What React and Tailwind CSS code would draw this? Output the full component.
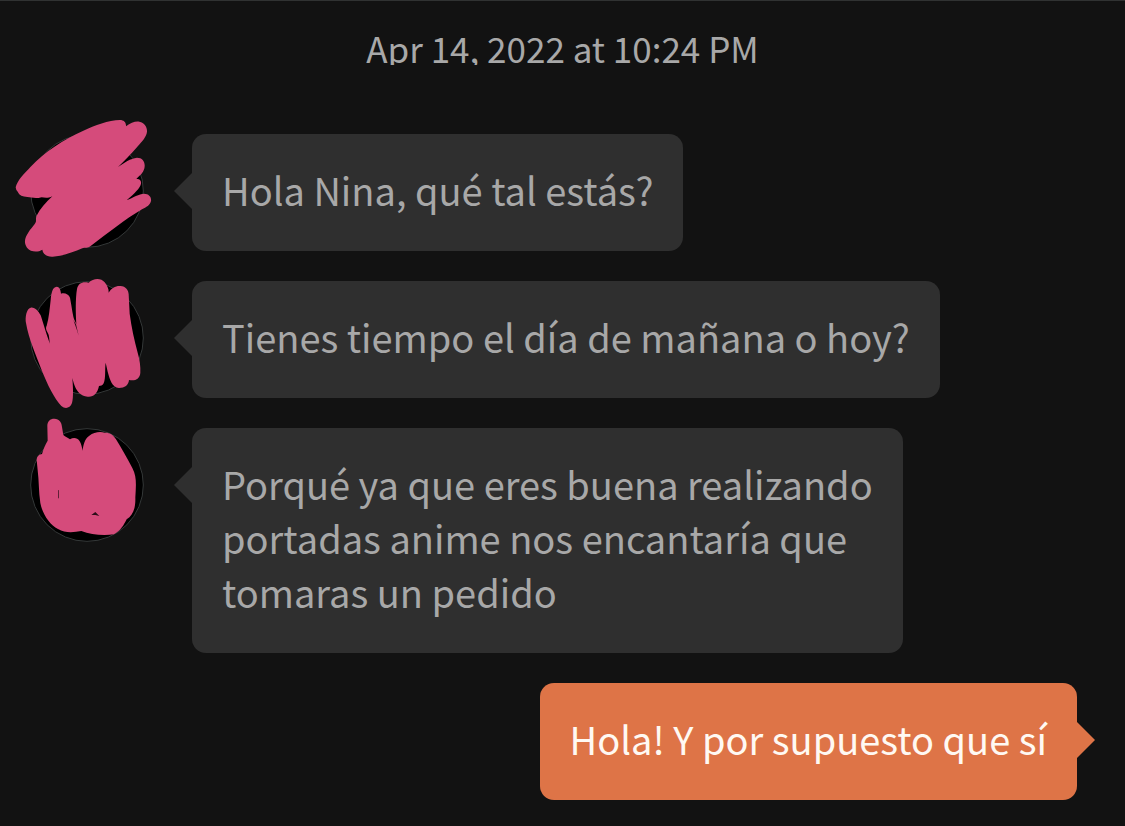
/**
 * Conversation thread — timestamp, incoming messages with avatars, outgoing reply
 */
import React from 'react';

const messages = [
  {
    id: 1,
    lines: ['Hola Nina, qué tal estás?'],
    viewBox: '90 87 342 342',
    scribble:
      'M47 247 C52 225 72 207 92 185 C135 140 190 103 250 77 C285 61 325 46 360 45 C371 45 379 52 378 64 C392 54 405 48 418 50 C434 53 442 67 441 80 C439 96 427 108 412 125 C393 147 372 168 354 186 C372 173 392 160 411 158 C427 158 435 170 434 184 C433 200 423 209 409 222 C418 220 425 227 423 236 C420 250 404 264 380 286 C400 277 417 267 432 266 C447 266 455 277 453 288 C450 301 439 306 426 313 C375 343 325 384 272 423 C263 430 254 427 247 430 C222 440 192 453 158 455 C142 456 129 448 127 434 C112 443 92 441 81 428 C70 412 75 397 86 381 C96 365 108 356 108 348 C108 341 108 338 109 334 C121 310 138 291 157 274 C143 281 133 278 125 277 C117 280 113 279 108 279 C89 277 73 275 64 272 C55 268 55 261 49 255 Z',
  },
  {
    id: 2,
    lines: ['Tienes tiempo el día de mañana o hoy?'],
    viewBox: '90 48 342 342',
    scribble:
      'M78 174 C75 158 79 131 92 128 C105 126 116 140 122 151 C128 168 140 211 150 236 C147 218 148 211 143 203 C137 193 137 187 140 182 C147 159 149 130 152 105 C154 84 157 66 170 65 C180 65 182 77 183 86 C193 82 206 87 210 98 C214 118 218 147 222 162 L229 177 C227 147 226 101 231 72 C235 54 248 49 266 53 C281 38 304 39 314 52 C321 61 327 72 326 83 C334 69 347 62 361 63 C378 64 385 75 386 88 L389 146 C394 185 403 226 414 267 C419 285 422 304 421 323 C420 341 406 349 387 345 C386 360 374 369 357 369 C336 366 330 345 323 320 L317 293 C314 311 318 338 311 355 C307 363 302 362 297 363 C292 386 280 397 263 395 C241 393 230 377 224 362 C220 354 219 345 217 339 C219 362 221 398 216 414 C210 430 196 433 184 423 C164 403 141 356 126 318 C108 270 86 222 78 174 Z',
    gap: 'M220 165 L228 178 L236 212 L231 196 Z',
  },
  {
    id: 3,
    lines: ['Porqué ya que eres buena realizando', 'portadas anime nos encantaría que', 'tomaras un pedido'],
    viewBox: '90 54 342 342',
    scribble:
      'M110 150 C110 139 118 133 126 132 C130 117 136 103 143 92 L142 48 C142 34 150 26 163 26 C178 26 185 37 186 51 L190 75 C196 80 204 83 210 88 C220 81 232 83 238 92 C244 101 246 112 248 122 C250 104 254 86 268 77 C281 67 299 64 314 68 C329 67 341 75 348 88 C365 116 382 145 397 174 C411 199 408 229 406 262 C407 293 400 315 380 328 C371 346 362 362 342 373 C310 378 272 374 244 363 C221 367 196 370 174 357 C149 344 127 312 121 279 C116 246 117 211 113 181 Z',
    gap: 'M274 315 L286 306 L298 318 L286 315 Z M175 241 L177 240 L176 266 L174 263 Z',
  },
  { id: 4, lines: ['Hola! Y por supuesto que sí'], own: true },
];

const Avatar = ({ viewBox, scribble, gap }) => (
  <svg viewBox={viewBox} className="w-28.5 h-28.5 shrink-0 overflow-visible" aria-hidden="true">
    <g transform={`translate(${viewBox.split(' ').slice(0, 2).join(' ')})`}>
      <circle cx="171" cy="171" r="169" fill="#000" stroke="#343838" strokeWidth="3" />
    </g>
    <path d={scribble} fill="#d54b7b" />
    {gap && <path d={gap} fill="#2b0d18" />}
  </svg>
);

const Bubble = ({ lines, own }) => (
  <div
    className={`relative rounded-[14px] px-[30px] pt-[29px] pb-[34px] text-[38px] leading-[54px] ${
      own ? 'bg-[#de7447] text-[#fff9f3]' : 'bg-[#2f2f2f] text-[#a8a8a8]'
    }`}
  >
    {/* Tail */}
    <svg
      viewBox="0 0 18 36"
      className={`absolute top-[39px] w-[18px] h-9 ${own ? 'left-full' : 'right-full'}`}
      aria-hidden="true"
    >
      <path d={own ? 'M0 0 L18 18 L0 36 Z' : 'M18 0 L0 18 L18 36 Z'} fill={own ? '#de7447' : '#2f2f2f'} />
    </svg>
    {lines.map((line) => (
      <p key={line} className="whitespace-nowrap">{line}</p>
    ))}
  </div>
);

const App = () => (
  <main className="min-h-screen bg-[#121212] border-t border-[#303232] pb-[26px] font-['Noto_Sans_CJK_SC','Open_Sans',sans-serif]">
    {/* Timestamp */}
    <div className="pt-6">
      <time dateTime="2022-04-14T22:24" className="block h-10 overflow-hidden text-center text-[35px] leading-[46px] text-[#a8a8a8]">
        Apr 14, 2022 at 10:24 PM
      </time>
    </div>

    {/* Messages */}
    <ul className="mt-[69px] flex flex-col gap-[30px]">
      {messages.map((msg) => (
        <li key={msg.id} className={`flex items-start ${msg.own ? 'justify-end pr-12' : 'gap-12 pl-[30px]'}`}>
          {!msg.own && <Avatar viewBox={msg.viewBox} scribble={msg.scribble} gap={msg.gap} />}
          <Bubble lines={msg.lines} own={msg.own} />
        </li>
      ))}
    </ul>
  </main>
);

export default App;
